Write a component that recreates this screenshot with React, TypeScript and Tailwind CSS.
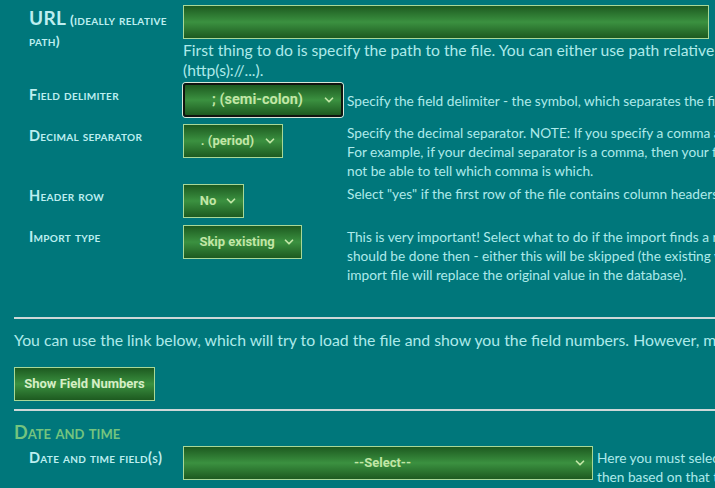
import React from 'react';
import { ChevronDown } from 'lucide-react';

const font = "font-['Lato','Noto_Sans',sans-serif] text-[#aeeaea]";
const label = "font-['Lato',sans-serif] font-bold text-[14.5px] leading-[18px] text-[#bdeef0] [font-variant:small-caps] tracking-[0.3px]";
const green = 'bg-[linear-gradient(to_bottom,#1d5a20_0%,#3b9140_50%,#1d5a20_100%)]';

interface SelectProps {
  value: string;
  width: string;
  focused?: boolean;
}

function FakeSelect({ value, width, focused }: SelectProps) {
  const border = focused
    ? 'border-2 border-[#101410] rounded-[3px] shadow-[0_0_0_1px_#d8e8d8]'
    : 'border border-[#a8d898]';
  return (
    <div className={`${width} h-[34px] shrink-0 ${green} ${border} flex items-center pl-2 pr-[5px]`}>
      <span
        className={`flex-1 text-center font-['Roboto',sans-serif] font-bold ${focused ? 'text-[14.5px]' : 'text-[13px]'} text-[#c2e6a6] whitespace-nowrap`}
      >
        {value}
      </span>
      <ChevronDown size={14} strokeWidth={3} className="text-[#c2e6a6] shrink-0" />
    </div>
  );
}

interface RowProps {
  title: string;
  select: React.ReactNode;
  lines: string[];
  cell?: string;
  descTop?: string;
  className?: string;
}

function Row({ title, select, lines, cell = 'w-[164px]', descTop = 'mt-0', className = '' }: RowProps) {
  return (
    <div className={`flex items-start ${className}`}>
      <div className={`w-[169px] shrink-0 pl-[15px] pt-[3px] ${label}`}>{title}</div>
      <div className={`${cell} shrink-0`}>{select}</div>
      <div className={`${descTop} ${font} text-[13.7px] leading-[19px] whitespace-nowrap`}>
        {lines.map((l, i) => (
          <div key={i}>{l}</div>
        ))}
      </div>
    </div>
  );
}

export default function App() {
  return (
    <div className="w-[715px] h-[488px] overflow-hidden bg-[#00777b]">
      <div className="w-[1100px] pl-[14px] pt-[5px]">
        {/* URL */}
        <div className="flex items-start">
          <div className={`w-[169px] shrink-0 pl-[15px] pt-[2px] pr-2 ${label} !leading-[21px]`}>
            <span className="text-[19px]">URL</span> <span className="text-[14px]">(ideally relative path)</span>
          </div>
          <div>
            <div className={`w-[526px] h-[34px] ${green} border border-[#a8d898]`} />
            <div className={`${font} text-[15.7px] leading-[20px] mt-[1px] whitespace-nowrap`}>
              <div>First thing to do is specify the path to the file. You can either use path relative to the site root or a full URL</div>
              <div>(http(s)://...).</div>
            </div>
          </div>
        </div>

        <Row
          className="mt-[3px]"
          title="Field delimiter"
          select={<FakeSelect value="; (semi-colon)" width="w-[160px]" focused />}
          descTop="mt-[8px]"
          lines={['Specify the field delimiter - the symbol, which separates the fields in each row of the file.']}
        />
        <Row
          className="mt-[7px]"
          title="Decimal separator"
          select={<FakeSelect value=". (period)" width="w-[100px]" />}
          descTop="-mt-[1px]"
          lines={[
            'Specify the decimal separator. NOTE: If you specify a comma as decimal separator, it must differ from the field delimiter.',
            'For example, if your decimal separator is a comma, then your field delimiter can not be a comma, because the system will',
            'not be able to tell which comma is which.',
          ]}
        />
        <Row
          className="mt-[4px]"
          title="Header row"
          select={<FakeSelect value="No" width="w-[61px]" />}
          lines={['Select "yes" if the first row of the file contains column headers.']}
        />
        <Row
          className="mt-[7px]"
          title="Import type"
          select={<FakeSelect value="Skip existing" width="w-[119px]" />}
          descTop="mt-[2px]"
          lines={[
            'This is very important! Select what to do if the import finds a record which already exists in the database. What',
            'should be done then - either this will be skipped (the existing value will be kept) or updated (the value in the',
            'import file will replace the original value in the database).',
          ]}
        />

        <div className="mt-[33px] h-[2px] bg-[#cdd8d8]" />
        <p className={`${font} text-[15.8px] leading-[20px] mt-[11px] whitespace-nowrap`}>
          You can use the link below, which will try to load the file and show you the field numbers. However, make sure the path is correct.
        </p>
        <button className={`mt-[17px] w-[141px] h-[34px] ${green} border border-[#a8d898] font-['Roboto',sans-serif] font-bold text-[13px] text-[#d6eec6]`}>
          Show Field Numbers
        </button>
        <div className="mt-[8px] h-[2px] bg-[#cdd8d8]" />

        <h2 className="mt-[10px] font-['Lato',sans-serif] font-bold text-[18px] leading-[22px] text-[#74c47e] [font-variant:small-caps]">
          Date and time
        </h2>
        <Row
          className="mt-[3px]"
          title="Date and time field(s)"
          cell="w-[414px]"
          select={<FakeSelect value="--Select--" width="w-[410px]" />}
          descTop="mt-[2px]"
          lines={['Here you must select the field(s) containing date and time,', 'then based on that the format will be determined.']}
        />
      </div>
    </div>
  );
}
